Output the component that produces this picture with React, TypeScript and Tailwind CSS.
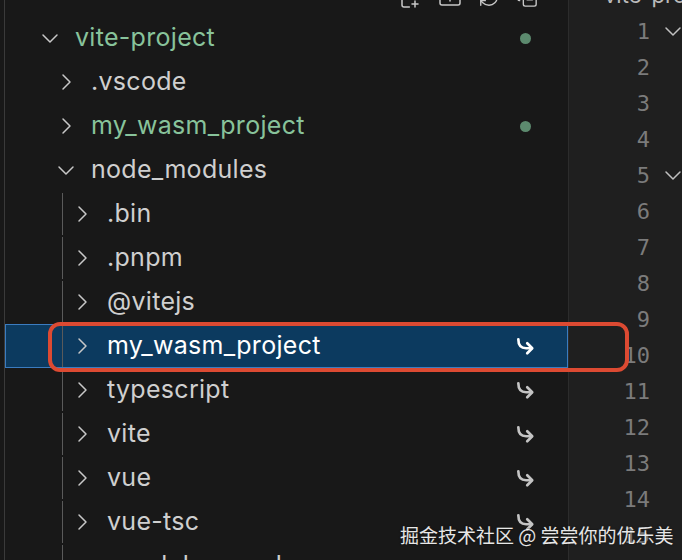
import { FilePlus2, FolderPlus, RefreshCw, CopyMinus } from 'lucide-react';

type Item = {
  name: string;
  depth: number;
  kind: 'open' | 'closed' | 'file';
  green?: boolean;
  dot?: boolean;
  link?: boolean;
  selected?: boolean;
};

const items: Item[] = [
  { name: 'vite-project', depth: 0, kind: 'open', green: true, dot: true },
  { name: '.vscode', depth: 1, kind: 'closed' },
  { name: 'my_wasm_project', depth: 1, kind: 'closed', green: true, dot: true },
  { name: 'node_modules', depth: 1, kind: 'open' },
  { name: '.bin', depth: 2, kind: 'closed' },
  { name: '.pnpm', depth: 2, kind: 'closed' },
  { name: '@vitejs', depth: 2, kind: 'closed' },
  { name: 'my_wasm_project', depth: 2, kind: 'closed', link: true, selected: true },
  { name: 'typescript', depth: 2, kind: 'closed', link: true },
  { name: 'vite', depth: 2, kind: 'closed', link: true },
  { name: 'vue', depth: 2, kind: 'closed', link: true },
  { name: 'vue-tsc', depth: 2, kind: 'closed', link: true },
  { name: '.modules.yaml', depth: 2, kind: 'file' },
];

function Chevron({ open }: { open: boolean }) {
  return (
    <svg width="20" height="20" viewBox="0 0 20 20" fill="none" stroke="currentColor" strokeWidth="1.5" strokeLinecap="round" strokeLinejoin="round">
      {open ? <path d="M3 7l7 7 7-7" /> : <path d="M7 3l7 7-7 7" />}
    </svg>
  );
}

function LinkArrow() {
  return (
    <svg width="20" height="20" viewBox="0 0 18 18" fill="none" stroke="currentColor" strokeWidth="2.4" strokeLinecap="round" strokeLinejoin="round">
      <path d="M3 3c0 5 2 8 7 8h5" />
      <path d="M11 6.5l4.5 4.5L11 15.5" />
    </svg>
  );
}

function Row({ item }: { item: Item }) {
  const text = item.selected ? 'text-white' : item.green ? 'text-[#88c39b]' : 'text-[#cfcfcf]';
  return (
    <div
      className={
        'h-[44px] shrink-0 flex items-center border ' +
        (item.selected ? 'bg-[#0c3a5f] border-[#3b7cc0]' : 'border-transparent')
      }
    >
      {item.depth === 2 ? (
        <div className="w-[66px] h-full flex shrink-0">
          <div className="w-[56px] shrink-0" />
          <div className="w-px h-full bg-[#5a5a5a] shrink-0" />
        </div>
      ) : (
        <div className={item.depth === 1 ? 'w-[50px] shrink-0' : 'w-[34px] shrink-0'} />
      )}
      <div className="w-[20px] shrink-0 flex items-center justify-center text-[#c8c8c8]">
        {item.kind === 'file' ? (
          <div className="w-[4px] h-[18px] bg-[#9b6fc0] rounded-sm mt-[10px]" />
        ) : (
          <Chevron open={item.kind === 'open'} />
        )}
      </div>
      <div className="w-[15px] shrink-0" />
      <span className={'text-[25px] tracking-[0.3px] whitespace-nowrap ' + text}>{item.name}</span>
      <div className="flex-1" />
      <div className="w-[20px] mr-[32px] flex items-center justify-center">
        {item.dot && <div className="w-[11px] h-[11px] rounded-full bg-[#5c8a6e]" />}
        {item.link && (
          <span className={item.selected ? 'text-white' : 'text-[#c4c4c4]'}>
            <LinkArrow />
          </span>
        )}
      </div>
    </div>
  );
}

export default function App() {
  const lines = Array.from({ length: 15 }, (_, i) => i + 1);
  return (
    <div className="relative w-[682px] h-[560px] overflow-hidden flex bg-[#181818] font-['Inter','Liberation_Sans',sans-serif]">
      {/* Explorer */}
      <div className="w-[569px] shrink-0 flex pl-[4px] border-r border-[#2c2c2c]">
        <div className="flex-1 flex flex-col border-l border-[#3a3a3a] -mt-[28px]">
          <div className="h-[44px] shrink-0 flex items-center text-[#c8c8c8]">
            <div className="w-[40px]" />
            <span className="mb-[10px]">
              <Chevron open />
            </span>
            <span className="ml-[12px] mb-[14px] text-[18px] font-semibold">VITE-PROJECT</span>
            <div className="flex-1" />
            <div className="flex items-center gap-[16px] mr-[30px] mt-[6px]">
              <FilePlus2 size={24} strokeWidth={1.5} />
              <FolderPlus size={24} strokeWidth={1.5} />
              <RefreshCw size={22} strokeWidth={1.5} />
              <CopyMinus size={22} strokeWidth={1.5} />
            </div>
          </div>
          {items.map((it, i) => (
            <Row key={i} item={it} />
          ))}
        </div>
      </div>

      {/* Editor gutter */}
      <div className="flex-1 bg-[#1f1f1f] flex flex-col -mt-[23px] font-['DejaVu_Sans_Mono',monospace]">
        <div className="h-[36px] shrink-0 flex items-center pl-[35px] text-[22px] text-[#bbbbbb] whitespace-nowrap font-['Inter','Liberation_Sans',sans-serif]">
          vite-project
        </div>
        {lines.map((n) => (
          <div key={n} className="h-[36px] shrink-0 flex items-center">
            <span className="w-[81px] text-right text-[22px] text-[#7b7b7b]">{n}</span>
            <span className="ml-[13px] text-[#c0c0c0]">
              {(n === 1 || n === 5) && (
                <svg width="20" height="20" viewBox="0 0 20 20" fill="none" stroke="currentColor" strokeWidth="1.5" strokeLinecap="round" strokeLinejoin="round">
                  <path d="M3 7l7 7 7-7" />
                </svg>
              )}
            </span>
          </div>
        ))}
      </div>

      {/* annotation */}
      <div className="absolute left-[48px] top-[322px] w-[581px] h-[50px] border-[4px] border-[#dc4a32] rounded-[12px]" />

      {/* watermark */}
      <div className="absolute left-[400px] top-[521px] text-[19px] text-white/90 whitespace-nowrap font-['Noto_Sans_CJK_SC',sans-serif] [text-shadow:0_0_2px_rgba(0,0,0,0.6)]">
        掘金技术社区 @ 尝尝你的优乐美
      </div>
    </div>
  );
}
